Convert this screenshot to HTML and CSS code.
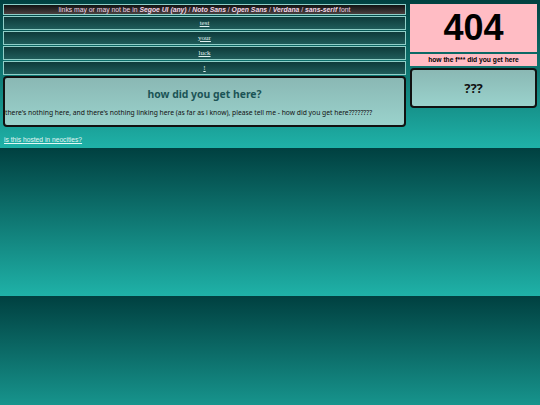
FILE: index.html
```html
<!DOCTYPE html>
<html>
<head>
<meta charset="utf-8">
<link rel="stylesheet" href="styles.css">
</head>
<body>
<div class="wrap">
  <div class="left">
    <div class="bar">links may or may not be in <b><i>Segoe UI (any)</i></b> / <b><i>Noto Sans</i></b> / <b><i>Open Sans</i></b> / <b><i>Verdana</i></b> / <b><i>sans-serif</i></b> font</div>
    <div class="row"><a href="#">test</a></div>
    <div class="row"><a href="#">your</a></div>
    <div class="row"><a href="#">luck</a></div>
    <div class="row"><a href="#">!</a></div>
    <div class="box main">
      <h1>how did you get here?</h1>
      <p>there's nothing here, and there's nothing linking here (as far as i know), please tell me - how did you get here????????</p>
    </div>
  </div>
  <div class="right">
    <div class="pink big">404</div>
    <div class="pink sub">how the f*** did you get here</div>
    <div class="box q">???</div>
  </div>
</div>
<div class="foot"><a href="#">is this hosted in neocities?</a></div>
</body>
</html>
```
FILE: styles.css
```css
html {
  background: linear-gradient(#004040, #1fb2a8) 0 0 / 100% 148px repeat;
}
body {
  margin: 0;
  padding: 4px 3px 0 3px;
  font-family: "Liberation Sans", Arial, sans-serif;
}
.wrap {
  display: flex;
  gap: 4px;
  align-items: flex-start;
}
.left {
  width: 403px;
  display: flex;
  flex-direction: column;
  gap: 1px;
}
.right {
  width: 127px;
  display: flex;
  flex-direction: column;
  gap: 2px;
}
.bar {
  height: 9px;
  border: 1px solid #8fcfc8;
  background: linear-gradient(#111, #4a4040);
  color: #f2d6e6;
  font-size: 6.8px;
  line-height: 9px;
  text-align: center;
}
.row {
  height: 12px;
  border: 1px solid #8fcfc8;
  background: linear-gradient(#0e3a3a, #1f5c5a);
  text-align: center;
  line-height: 12px;
  font-family: "Liberation Serif", "Times New Roman", serif;
  font-size: 7px;
}
.row a {
  color: #e0f2f0;
}
.box {
  border: 2px solid #111;
  border-radius: 4px;
  background: linear-gradient(#8ab8b4, #9ad2cc);
}
.main {
  height: 47px;
  font-family: "Noto Sans", sans-serif;
}
.main h1 {
  margin: 9px 0 0;
  text-align: center;
  font-size: 10.4px;
  line-height: 15px;
  color: #1b5456;
}
.main p {
  margin: 6px 0 0;
  font-size: 6.76px;
  line-height: 9px;
  color: #111;
}
.pink {
  background: #ffbcc4;
  color: #000;
  text-align: center;
  font-weight: bold;
}
.big {
  height: 48px;
  font-size: 36px;
  line-height: 48px;
}
.sub {
  height: 12px;
  font-size: 6.7px;
  line-height: 12px;
}
.q {
  height: 36px;
  font-family: "Noto Sans", sans-serif;
  font-weight: bold;
  font-size: 13px;
  line-height: 36px;
  text-align: center;
  color: #111;
}
.foot {
  padding: 9px 1px 0;
  height: 17px;
  font-size: 6.7px;
  line-height: 8px;
}
.foot a {
  color: #e4f6f4;
}
```
